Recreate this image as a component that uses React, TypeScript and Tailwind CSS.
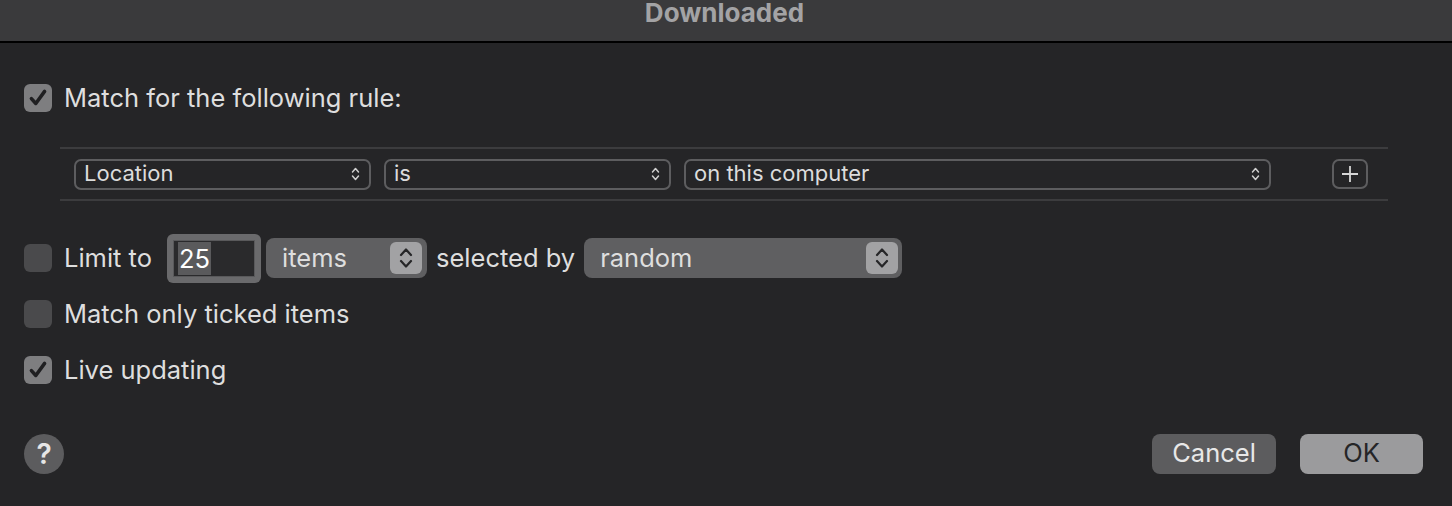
import React from "react";

const font = { fontFamily: "Inter, 'Liberation Sans', sans-serif" };

function Check({ checked }: { checked: boolean }) {
  return (
    <div
      className={`w-[28px] h-[28px] rounded-[6px] flex items-center justify-center shrink-0 ${
        checked ? "bg-[#7e7e80]" : "bg-[#4a4a4c]"
      }`}
    >
      {checked && (
        <svg width="22" height="22" viewBox="0 0 20 20">
          <path d="M4 10.5 L8 15 L16 4" fill="none" stroke="#1f1f21" strokeWidth="3.2" strokeLinecap="round" strokeLinejoin="round" />
        </svg>
      )}
    </div>
  );
}

function SmallChevrons() {
  return (
    <svg width="9" height="16" viewBox="0 0 9 16">
      <path d="M1.5 6 L4.5 2.5 L7.5 6 M1.5 10 L4.5 13.5 L7.5 10" fill="none" stroke="#cfcfcf" strokeWidth="1.5" strokeLinecap="round" strokeLinejoin="round" />
    </svg>
  );
}

function RulePopup({ label, w }: { label: string; w: string }) {
  return (
    <div className={`${w} h-[31px] rounded-[7px] border-2 border-[#5d5d5f] flex items-center justify-between pl-[8px] pr-[9px]`}>
      <span className="text-[22px] text-[#dcdcdc] leading-none -mt-[2px]">{label}</span>
      <SmallChevrons />
    </div>
  );
}

function Stepper() {
  return (
    <div className="w-[32px] h-[32px] rounded-[6px] bg-[#a2a2a4] flex items-center justify-center">
      <svg width="16" height="26" viewBox="0 0 16 26">
        <path d="M3 10 L8 4.5 L13 10 M3 16 L8 21.5 L13 16" fill="none" stroke="#262628" strokeWidth="2.2" strokeLinecap="round" strokeLinejoin="round" />
      </svg>
    </div>
  );
}

export default function App() {
  return (
    <div className="w-[1452px] h-[506px] bg-[#252527] text-[#dedede] overflow-hidden" style={font}>
      <div className="h-[43px] bg-[#3a3a3c] border-b-[2px] border-black flex justify-center">
        <span className="text-[26px] font-bold text-[#a3a3a5] leading-[26px] -ml-[3px]">Downloaded</span>
      </div>
      <div className="px-[24px]">
        <div className="mt-[41px] flex items-center gap-[12px] h-[28px]">
          <Check checked />
          <span className="text-[25.5px]">Match for the following rule:</span>
        </div>
        <div className="mt-[35px] ml-[36px] w-[1328px] h-[54px] border-y-2 border-[#3c3c3e] flex items-center pl-[14px]">
          <RulePopup label="Location" w="w-[297px]" />
          <div className="w-[13px]" />
          <RulePopup label="is" w="w-[287px]" />
          <div className="w-[13px]" />
          <RulePopup label="on this computer" w="w-[587px]" />
          <div className="ml-[61px] w-[36px] h-[30px] rounded-[7px] border-2 border-[#5d5d5f] flex items-center justify-center">
            <svg width="20" height="20" viewBox="0 0 20 20">
              <path d="M10 2 V18 M2 10 H18" stroke="#d6d6d6" strokeWidth="1.8" />
            </svg>
          </div>
        </div>
        <div className="mt-[32px] h-[50px] flex items-center">
          <Check checked={false} />
          <span className="ml-[12px] text-[25.5px]">Limit to</span>
          <div className="ml-[15px] w-[94px] h-[49px] rounded-[6px] bg-[#6a6a6c] p-[6px]">
            <div className="w-full h-full bg-[#2a2a2c] border border-[#59595b] flex items-center pl-[4px]">
              <span className="bg-[#5a5a5c] text-white text-[25.5px] leading-[33px] px-[1px]">25</span>
            </div>
          </div>
          <div className="ml-[5px] w-[161px] h-[40px] rounded-[8px] bg-[#5f5f61] flex items-center justify-between pl-[16px] pr-[5px]">
            <span className="text-[25.5px]">items</span>
            <Stepper />
          </div>
          <span className="ml-[9px] text-[25.5px]">selected by</span>
          <div className="ml-[9px] w-[318px] h-[40px] rounded-[8px] bg-[#5f5f61] flex items-center justify-between pl-[16px] pr-[4px]">
            <span className="text-[25.5px]">random</span>
            <Stepper />
          </div>
        </div>
        <div className="mt-[17px] flex items-center gap-[12px] h-[28px]">
          <Check checked={false} />
          <span className="text-[25.5px]">Match only ticked items</span>
        </div>
        <div className="mt-[28px] flex items-center gap-[12px] h-[28px]">
          <Check checked />
          <span className="text-[25.5px]">Live updating</span>
        </div>
        <div className="mt-[50px] flex items-center">
          <div className="w-[40px] h-[40px] rounded-full bg-[#5c5c5e] flex items-center justify-center text-[28px] font-semibold text-[#e6e6e6] leading-none">
            ?
          </div>
          <div className="flex-1" />
          <div className="w-[124px] h-[40px] rounded-[8px] bg-[#5c5c5e] flex items-center justify-center text-[25.5px] text-[#e8e8e8] pb-[2px]">
            Cancel
          </div>
          <div className="ml-[24px] mr-[5px] w-[123px] h-[40px] rounded-[8px] bg-[#9b9b9d] flex items-center justify-center text-[25.5px] text-[#252527] pb-[2px]">
            OK
          </div>
        </div>
      </div>
    </div>
  );
}
